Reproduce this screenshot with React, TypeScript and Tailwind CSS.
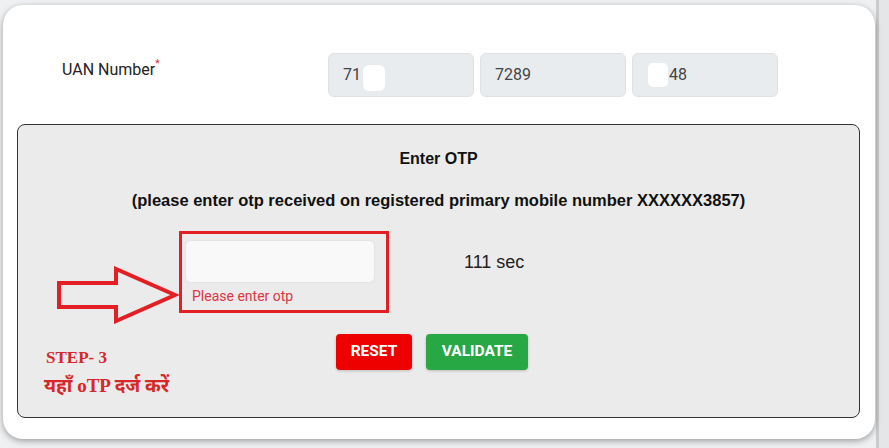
import React from 'react'

const Arrow = () => (
  <svg width="124" height="58" viewBox="0 0 124 58" className="absolute left-[56px] top-[266px]">
    <path
      d="M3 17 L60 17 L60 3 L119 29 L60 55 L60 41 L3 41 Z"
      fill="none"
      stroke="#e31e24"
      strokeWidth="4"
      strokeLinejoin="miter"
    />
  </svg>
)

const App = () => {
  return (
    <div className="w-[889px] h-[448px] bg-[#eef0f2] relative overflow-hidden font-['Roboto',sans-serif]">
      <div className="absolute right-0 top-0 w-[13px] h-full bg-[#e4e6e8] border-l-[3px] border-[#c9cbcd]"></div>
      <div className="absolute left-[3px] top-[5px] w-[872px] h-[434px] bg-white rounded-[20px] shadow-[0_2px_6px_rgba(0,0,0,0.35)] flex flex-col">
        {/* UAN row */}
        <div className="flex items-start h-[119px]">
          <div className="pl-[59px] pt-[53px] w-[325px] text-[16px] text-[#222]">
            UAN Number<span className="text-[#e31e24] text-[10px] align-top relative top-[-2px]">*</span>
          </div>
          <div className="flex gap-[6px] pt-[48px]">
            {['71', '7289', '48'].map((v, i) => (
              <div
                key={i}
                className="relative w-[146px] h-[44px] bg-[#e9ecef] border border-[#dfe2e5] rounded-[6px] flex items-center pl-[14px] text-[16px] text-[#444]"
              >
                {i === 2 && <span className="w-[20px] h-[24px] bg-white rounded-[5px] mr-[1px] ml-[1px]"></span>}
                <span>{v}</span>
                {i === 0 && <span className="w-[22px] h-[26px] bg-white rounded-[6px] ml-[2px] mt-[6px]"></span>}
              </div>
            ))}
          </div>
        </div>

        {/* OTP panel */}
        <div className="ml-[14px] w-[843px] h-[294px] bg-[#ebebeb] border border-[#333] rounded-[8px] flex flex-col items-center">
          <div className="pt-[24px] text-[16px] leading-[20px] font-bold text-[#111] font-['Liberation_Sans',Arial,sans-serif]">Enter OTP</div>
          <div className="pt-[21px] text-[16.5px] leading-[20px] font-bold text-[#111] font-['Liberation_Sans',Arial,sans-serif]">
            (please enter otp received on registered primary mobile number XXXXXX3857)
          </div>
          <div className="w-full flex pt-[21px]">
            <div className="ml-[161px] w-[210px] h-[82px] border-[3px] border-[#e31e24] pl-[3px] pt-[6px]">
              <div className="w-[190px] h-[43px] bg-[#f9f9f9] border border-[#e4e4e4] rounded-[6px]"></div>
              <div className="pl-[7px] pt-[3px] text-[14px] text-[#dc3545]">Please enter otp</div>
            </div>
            <div className="ml-[75px] pt-[18px] text-[18px] text-[#222] font-['Liberation_Sans',Arial,sans-serif]">111 sec</div>
          </div>
          <div className="w-full flex items-start">
            <div className="w-[318px] pl-[28px] pt-[33px] font-['Liberation_Serif','Noto_Sans',serif] font-bold text-[#d62828]">
              <div className="text-[17px] leading-[24px]">STEP- 3</div>
              <div className="text-[19px] leading-[32px] -ml-[2px]">यहाँ oTP दर्ज करें</div>
            </div>
            <div className="flex gap-[14px] pt-[21px]">
              <button className="w-[76px] h-[36px] bg-[#ee0000] rounded-[4px] text-white font-bold text-[15.5px] shadow-[0_1px_3px_rgba(0,0,0,0.2)]">
                RESET
              </button>
              <button className="w-[102px] h-[36px] bg-[#28a745] rounded-[4px] text-white font-bold text-[15.5px] shadow-[0_1px_3px_rgba(0,0,0,0.2)]">
                VALIDATE
              </button>
            </div>
          </div>
        </div>
      </div>
      <Arrow />
    </div>
  )
}

export default App
